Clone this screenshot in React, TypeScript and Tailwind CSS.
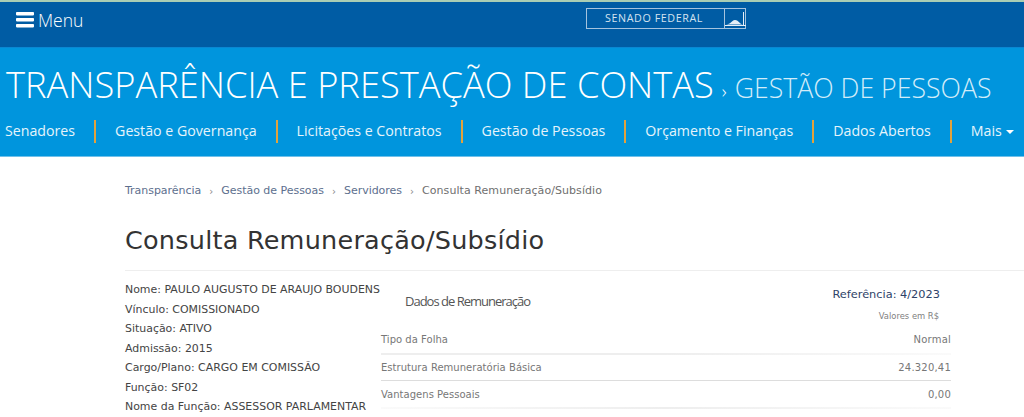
const nav = ["Gestão e Governança", "Licitações e Contratos", "Gestão de Pessoas", "Orçamento e Finanças", "Dados Abertos"];
const crumbs = ["Transparência", "Gestão de Pessoas", "Servidores"];
const info = [
  ["Nome", "PAULO AUGUSTO DE ARAUJO BOUDENS"],
  ["Vínculo", "COMISSIONADO"],
  ["Situação", "ATIVO"],
  ["Admissão", "2015"],
  ["Cargo/Plano", "CARGO EM COMISSÃO"],
  ["Função", "SF02"],
  ["Nome da Função", "ASSESSOR PARLAMENTAR"],
];
const rows = [
  ["Tipo da Folha", "Normal", "h-[27px]", "h-[2px] bg-gradient-to-r from-[#eeeeee] via-[#eeeeee] to-[#fafafa]"],
  ["Estrutura Remuneratória Básica", "24.320,41", "h-[25px]", "h-px bg-[#dddddd]"],
  ["Vantagens Pessoais", "0,00", "h-[26px]", "h-[2px] bg-gradient-to-r from-[#fafafa] via-[#eeeeee] to-[#fafafa]"],
];

export default function App() {
  return (
    <div className="h-[417px] w-[1024px] overflow-hidden bg-white font-['DejaVu_Sans',sans-serif]">
      <header className="h-[47px] border-t-2 border-[#a9cdb4] bg-[#005ca4]">
        <div className="flex h-full items-start">
          <div className="flex w-[586px] items-center gap-[4px] pl-4 pt-[5px] font-['Open_Sans',sans-serif] text-[17.5px] font-light text-white">
            <svg width="18" height="16" viewBox="0 0 18 16" className="fill-white">
              <rect y="0" width="18" height="3.4" rx="0.8" />
              <rect y="6" width="18" height="3.4" rx="0.8" />
              <rect y="12" width="18" height="3.4" rx="0.8" />
            </svg>
            <span>Menu</span>
          </div>
          <div className="mt-[6px] flex h-[21px] w-[160px] items-stretch border border-[#a5c3de]">
            <div className="flex flex-1 items-center justify-center pr-[3px] font-['Open_Sans',sans-serif] text-[10.7px] tracking-[0.6px] text-[#d5e3f0]">SENADO FEDERAL</div>
            <div className="w-[21px] border-l border-[#a5c3de]">
              <svg width="21" height="19" viewBox="0 0 21 19">
                <path d="M1 15.5 C6 15.5 6 11.5 10 11 C14 11 14.5 15.5 18 15.5 Z" fill="#e6eef6" />
                <path d="M18.5 3 V16" stroke="#e6eef6" strokeWidth="1" />
                <path d="M0 16.5 H21" stroke="#e6eef6" strokeWidth="1" />
              </svg>
            </div>
          </div>
        </div>
      </header>
      <section className="h-[110px] border-b border-[#6fc0ea] border-t border-t-[#0a87d2] bg-[#0095dd] font-['Open_Sans',sans-serif] text-white">
        <div className="flex h-[71px] items-baseline whitespace-nowrap pl-[6px] pt-[9px]">
          <span className="text-[36.25px] font-light leading-[54px]">TRANSPARÊNCIA E PRESTAÇÃO DE CONTAS</span>
          <span className="ml-[8px] text-[19px] font-light">›</span>
          <span className="ml-[8px] text-[26.7px] font-light text-[#d2ecf9]">GESTÃO DE PESSOAS</span>
        </div>
        <nav className="flex h-[24px] items-center whitespace-nowrap pl-[4px] text-[14.2px] text-[#e6f4fb]">
          <span className="pl-px">Senadores</span>
          {nav.map((n) => (
            <span key={n} className="ml-[19px] flex h-[23px] items-center border-l-2 border-[#e3a23c] pl-[19px]">{n}</span>
          ))}
          <span className="ml-[19px] flex h-[23px] items-center gap-[4px] border-l-2 border-[#e3a23c] pl-[19px]">
            Mais
            <span className="mt-[1px] h-0 w-0 border-x-[4px] border-t-[4px] border-x-transparent border-t-white" />
          </span>
        </nav>
      </section>
      <main className="pl-[125px] pt-[27px] text-[11px] text-[#4b4b4b]">
        <div className="flex h-[14px] items-center whitespace-nowrap text-[#5d6f8e]">
          {crumbs.map((c) => (
            <span key={c} className="flex items-center tracking-[-0.03px]">
              {c}
              <span className="mx-[8px] text-[10px] text-[#888888]">›</span>
            </span>
          ))}
          <span className="tracking-[0.07px] text-[#6f6f6f]">Consulta Remuneração/Subsídio</span>
        </div>
        <h1 className="mt-[27px] h-[45px] text-[25.5px] font-normal leading-[30px] tracking-[0.23px] text-[#333333]">Consulta Remuneração/Subsídio</h1>
        <div className="border-t border-[#eeeeee]">
          <div className="flex pt-[9px]">
            <div className="w-[256px] shrink-0 whitespace-nowrap">
              {info.map(([k, v]) => (
                <p key={k} className="h-[19.5px] text-[10.95px] leading-[19.5px] text-[#444444]">{k}: {v}</p>
              ))}
            </div>
            <div className="w-[570px] shrink-0">
              <div className="flex h-[46px] justify-between pr-[11px]">
                <span className="pl-[24px] pt-[12px] font-['Open_Sans',sans-serif] text-[13px] leading-[18px] tracking-[-1px] text-[#555555]">Dados de Remuneração</span>
                <div className="flex flex-col items-end pt-[7px]">
                  <span className="text-[11.35px] leading-[14px] text-[#2e4368]">Referência: 4/2023</span>
                  <span className="mr-px mt-[9px] text-[8.4px] leading-[12px] text-[#808080]">Valores em R$</span>
                </div>
              </div>
              {rows.map(([a, b, h, line]) => (
                <div key={a}>
                  <div className={`flex items-center justify-between text-[10px] text-[#777777] ${h}`}>
                    <span className="tracking-[0.03px]">{a}</span>
                    <span className="tracking-[0.2px]">{b}</span>
                  </div>
                  <div className={line} />
                </div>
              ))}
            </div>
          </div>
        </div>
      </main>
    </div>
  );
}
